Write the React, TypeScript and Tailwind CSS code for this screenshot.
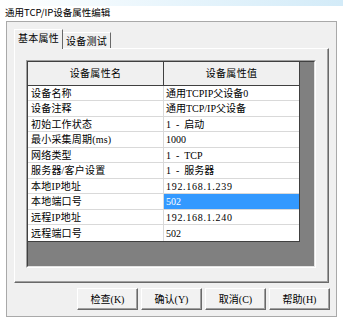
const ROWS: [string, string, boolean?][] = [
  ["设备名称", "通用TCPIP父设备0"],
  ["设备注释", "通用TCP/IP父设备"],
  ["初始工作状态", "1  -  启动"],
  ["最小采集周期(ms)", "1000"],
  ["网络类型", "1  -  TCP"],
  ["服务器/客户设置", "1  -  服务器"],
  ["本地IP地址", "192.168.1.239", true],
  ["本地端口号", "502"],
  ["远程IP地址", "192.168.1.240", true],
  ["远程端口号", "502"],
];

const SELECTED = 7;

const BUTTONS = ["检查(K)", "确认(Y)", "取消(C)", "帮助(H)"];

export default function App() {
  return (
    <div className="flex h-[323px] w-[343px] flex-col overflow-hidden bg-white font-['Noto_Sans_CJK_SC',sans-serif] text-black">
      {/* title */}
      <div className="h-[6px] bg-gradient-to-r from-white via-[#e8f5fc] to-[#d3ebf8]" />
      <div className="h-[15px] pl-[5px] text-[9.5px] leading-[12px]">通用TCP/IP设备属性编辑</div>

      {/* dialog body */}
      <div className="mx-[6px] flex h-[296px] flex-col border border-[#a9a9a9] bg-[#f0f0f0] px-[7px] pt-[7px] font-['Liberation_Serif','Noto_Sans_CJK_SC',serif] text-[10px]">
        {/* tabs */}
        <div className="flex h-[19px] items-end">
          <div className="relative z-10 -mb-px flex h-[20px] w-[49px] items-center justify-center border-t border-r border-l border-t-white border-r-[#696969] border-l-white bg-[#f0f0f0] pb-[2px] tracking-[0.3px]">
            基本属性
          </div>
          <div className="flex h-[16px] w-[48px] items-center justify-center border-t border-r border-t-white border-r-[#696969] bg-[#f0f0f0] pt-px tracking-[0.3px]">
            设备测试
          </div>
        </div>

        {/* panel */}
        <div className="h-[235px] border border-t-white border-r-[#696969] border-b-[#696969] border-l-white pt-[11px] pl-[11px] shadow-[inset_-1px_-1px_0_#a0a0a0]">
          <div className="h-[208px] w-[290px] border border-t-[#a0a0a0] border-r-white border-b-white border-l-[#a0a0a0]">
            <div className="h-full w-full border border-t-[#404040] border-r-[#e3e3e3] border-b-[#e3e3e3] border-l-[#404040] bg-[#808080]">
              <div className="w-[272px] border-r border-b border-[#404040] bg-white">
                {/* header */}
                <div className="flex h-[24px] border-b border-[#404040] bg-[#f0f0f0]">
                  <div className="flex w-[136px] shrink-0 items-center justify-center border-r border-[#404040] tracking-[0.3px]">设备属性名</div>
                  <div className="flex flex-1 items-center justify-center tracking-[0.3px]">设备属性值</div>
                </div>
                {ROWS.map(([name, value, wide], i) => (
                  <div
                    key={name}
                    className={`flex border-b border-[#d9d9d9] last:border-b-0 ${i % 2 === 0 ? "h-[15px]" : "h-[16px]"}`}
                  >
                    <div className="flex w-[136px] shrink-0 items-center border-r border-[#d9d9d9] pl-[3px] tracking-[0.2px] whitespace-pre">{name}</div>
                    <div
                      className={`flex flex-1 items-center pl-[2px] whitespace-pre ${i === SELECTED ? "bg-[#3399ff] text-white" : ""} ${wide ? "tracking-[0.7px]" : ""}`}
                    >
                      {value}
                    </div>
                  </div>
                ))}
              </div>
            </div>
          </div>
        </div>

        {/* buttons */}
        <div className="-mr-px mt-[5px] flex justify-end gap-[3px]">
          {BUTTONS.map((b) => (
            <button
              key={b}
              className="flex h-[22px] w-[61px] items-center justify-center border border-t-white border-r-[#696969] border-b-[#696969] border-l-white bg-[#f2f2f2] shadow-[inset_-1px_-1px_0_#a0a0a0]"
            >
              {b}
            </button>
          ))}
        </div>
      </div>
    </div>
  );
}
